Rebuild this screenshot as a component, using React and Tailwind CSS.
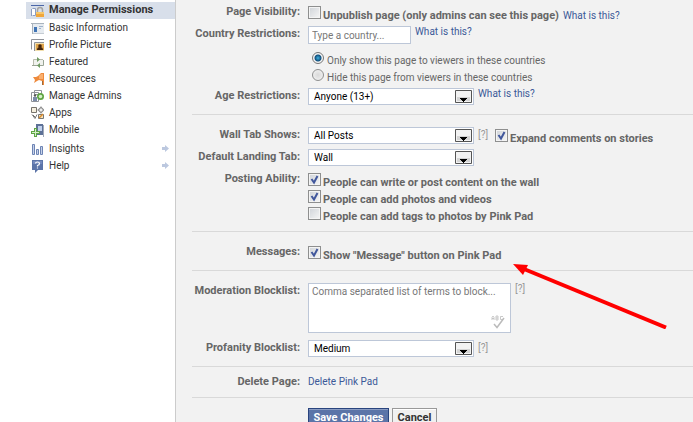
import React from 'react'

const NAV_ITEMS = [
  { name: 'Manage Permissions', icon: 'lock', active: true },
  { name: 'Basic Information', icon: 'info' },
  { name: 'Profile Picture', icon: 'picture' },
  { name: 'Featured', icon: 'featured' },
  { name: 'Resources', icon: 'resources' },
  { name: 'Manage Admins', icon: 'admins' },
  { name: 'Apps', icon: 'apps' },
  { name: 'Mobile', icon: 'mobile' },
]

const MORE_ITEMS = [
  { name: 'Insights', icon: 'insights' },
  { name: 'Help', icon: 'help' },
]

const ICONS = {
  lock: (
    <>
      <path d="M0 1h13v1H0z" fill="#4a66a8" />
      <path d="M1 5h4v7H1z" fill="#fff" />
      <path d="M.5 12V5M1.500 4.500h3v7h-3" fill="none" stroke="#8b9dc3" />
      <path d="M6.500 9V6q0-2.500 2.500-2.500t2.500 2.500v3" fill="none" stroke="#a3a3a3" strokeWidth="1.500" />
      <path d="M5 8h8v5H5z" fill="#f0a63a" />
      <path d="M5 8h8v2H5z" fill="#f8c76a" />
    </>
  ),
  info: (
    <>
      <path d="M1 2h12v11H1z" fill="#e6ebf0" />
      <path d="M0 2h13v1H0zM1 3h1v10H1z" fill="#a9b3bd" />
      <path d="M3 6h3v5H3z" fill="#3f74b5" />
      <path d="M8 5h4v1H8zM8 7h2v1H8z" fill="#9eb2cc" />
      <path d="M2 12h11v1H2z" fill="#c5ccd3" />
    </>
  ),
  picture: (
    <>
      <path d="M.5 11.500v-10H13M3.500 13V4.500H13" fill="none" stroke="#8f9299" />
      <path d="M4 5h9v8H4z" fill="#f2dfae" />
      <path d="M5 6h8v6H5z" fill="#e0a44a" />
      <circle cx="9" cy="8" r="1.800" fill="#45260f" />
      <path d="M6 12q0-3 3-3t3 3z" fill="#45260f" />
    </>
  ),
  featured: (
    <>
      <path d="M2 4h10v6H2z" fill="#f0f2ee" />
      <path d="M12 4.500H2.500V10" fill="none" stroke="#b9bcae" />
      <path d="M1 10.500h11.500V5" fill="none" stroke="#9aa595" />
      <path d="M6 2l3 2.500L6 7zM9 8l-3 2.500L9 13z" fill="#6f9b62" />
    </>
  ),
  resources: (
    <>
      <path d="M2 5h3l2-1 3-3h3v12h-2V9l-3-1-2 1-3 2 1-3z" fill="#ee8a3c" />
      <path d="M8 4l2-2h2v5H8z" fill="#f9b070" />
      <path d="M11 9h1v4h-1z" fill="#9a6a3c" />
    </>
  ),
  admins: (
    <>
      <path d="M3.500 1.500h7v4h-7zM.5 3.500h7v9h-7z" fill="#fff" stroke="#8f9299" />
      <path d="M2 8h4v4H2z" fill="#7b8ba8" />
      <circle cx="4" cy="6.500" r="1.200" fill="#555" />
      <circle cx="9.500" cy="7.500" r="3.500" fill="#5fa544" />
      <circle cx="9.500" cy="7.500" r="1.800" fill="#d5efc9" />
    </>
  ),
  apps: (
    <>
      <path d="M.5 1.500h5v5h-5z" fill="#f5efdf" stroke="#77736c" />
      <circle cx="10" cy="4" r="2.200" fill="#eee" stroke="#777" />
      <path d="M10 .5V2M10 6v1.500M6.500 4H8M12 4h1" stroke="#777" />
      <path d="M1 8.500l3 4 2-4M2 9l3 3" fill="none" stroke="#777" />
      <path d="M7.500 8.500h5v4h-5z" fill="#f6e2ba" stroke="#777" />
      <path d="M8 12l4-4" stroke="#d98a2b" strokeWidth="1.500" />
    </>
  ),
  mobile: (
    <>
      <path d="M5 1h7v11H5z" fill="#5d7197" />
      <path d="M7 3h4v5H7z" fill="#c0d0ec" />
      <path d="M12 2h1v12h-1z" fill="#a1a9b8" />
      <path d="M3 5h3v3h3v3H6v3H3v-3H0V8h3z" fill="#5fa544" />
      <path d="M4 6h1v3h3v1H5v3H4v-3H1V9h3z" fill="#d5efc9" />
    </>
  ),
  insights: (
    <path d="M1.500 2.500h2v10h-2zM5.500 7.500h2v5h-2zM9.500 4.500h2v8h-2z" fill="#c6d1e8" stroke="#6d84b4" />
  ),
  help: (
    <>
      <path d="M1 1h11v10H7l-3 3v-3H1z" fill="#5b74a8" />
      <path d="M2 2h9v3H2z" fill="#748abd" />
      <path d="M4.500 4.500q0-1.500 2-1.500t2 1.500-2 2v1M6.500 8.500v1" fill="none" stroke="#fff" strokeWidth="1.200" />
    </>
  ),
}

const NavItem = ({ name, icon, active, arrow }) => (
  <a
    href="#"
    className={`flex items-center h-[17px] gap-[5px] pl-[5px] pr-[6px] text-[#333] ${active ? 'bg-[#d8dfea] text-[11px] font-bold' : ''}`}
  >
    <svg viewBox="0 0 13 14" className="w-[13px] h-[14px] shrink-0" aria-hidden="true">
      {ICONS[icon]}
    </svg>
    <span className="flex-1 whitespace-nowrap">{name}</span>
    {arrow && (
      <svg viewBox="0 0 7 7" className="w-[7px] h-[7px]" aria-hidden="true">
        <path d="M0 2h3V0l4 3.500L3 7V5H0z" fill="#bcc8df" />
      </svg>
    )}
  </a>
)

const Section = ({ className, children }) => (
  <section className={`border-b border-[#d9d9d9] ${className}`}>{children}</section>
)

const Row = ({ label, htmlFor, tight, className = '', children }) => (
  <div className={`flex items-start gap-2 ${className}`}>
    <label
      htmlFor={htmlFor}
      className={`w-[108px] shrink-0 text-right text-[11px] font-bold whitespace-nowrap ${tight ? 'leading-3' : 'leading-4'}`}
    >
      {label}
    </label>
    {children}
  </div>
)

const Checkbox = ({ id, label, checked }) => (
  <div className="flex items-start gap-[2px] h-[17px]">
    <span className="relative size-[13px] shrink-0">
      <input
        id={id}
        type="checkbox"
        defaultChecked={checked}
        className="peer block appearance-none size-[13px] border border-[#8e8f8f] bg-linear-to-br from-[#cfd3d8] to-[#f6f6f6] shadow-[inset_0_0_0_1px_#f4f4f4]"
      />
      <svg viewBox="0 0 13 13" className="absolute inset-0 hidden peer-checked:block pointer-events-none" aria-hidden="true">
        <path d="M3.500 6l2.500 3.500L9.500 3" fill="none" stroke="#41579c" strokeWidth="2" />
      </svg>
    </span>
    <label htmlFor={id} className="pt-1 text-[11px] leading-3 font-bold whitespace-nowrap">{label}</label>
  </div>
)

const Radio = ({ id, label, checked }) => (
  <div className="flex items-start h-[17px] gap-[3px] pl-1">
    <input
      id={id}
      type="radio"
      name="country-mode"
      defaultChecked={checked}
      className="appearance-none size-3 mt-[2px] shrink-0 rounded-full border border-[#8e8f8f] bg-[radial-gradient(#d9d9d9,#f6f6f6)] checked:border-[#777] checked:bg-[radial-gradient(circle,#3fb2e0_0,#12507e_3px,#f4f4f4_4px)]"
    />
    <label htmlFor={id} className="pt-[5px] leading-3 whitespace-nowrap">{label}</label>
  </div>
)

const Select = ({ id, value }) => (
  <span className="relative w-[166px] shrink-0">
    <select
      id={id}
      defaultValue={value}
      className="block appearance-none w-full h-[17px] pl-[5px] border border-[#bdc7d8] bg-white text-black leading-[15px]"
    >
      <option>{value}</option>
    </select>
    <svg viewBox="0 0 17 13" className="absolute right-[2px] top-[2px] w-[17px] h-[13px] pointer-events-none" aria-hidden="true">
      <path d="M.5.500h16v12H.5z" fill="#f2f2f2" stroke="#555" />
      <path d="M2 7h13v4H2z" fill="#d4d4d4" />
      <path d="M5 8h7v1h-1v1h-1v1H9v1H8v-1H7v-1H6V9H5z" fill="#000" />
    </svg>
  </span>
)

const HelpLink = () => (
  <a href="#" className="leading-3 text-[#3b5998] whitespace-nowrap">What is this?</a>
)

const Hint = () => (
  <a href="#" className="leading-3 text-[#999] whitespace-nowrap">[?]</a>
)

export default function App() {
  return (
    <div className="relative flex h-screen overflow-hidden bg-white font-['Roboto',sans-serif] text-[10px] text-[#666]">
      <nav className="w-[175px] shrink-0 pl-[26px] pt-[2px]">
        {NAV_ITEMS.map((item) => (
          <NavItem key={item.name} {...item} />
        ))}
        <div className="pt-[2px]">
          {MORE_ITEMS.map((item) => (
            <NavItem key={item.name} {...item} arrow />
          ))}
        </div>
      </nav>

      <main className="flex-1 min-w-0 border-l border-[#ccc] bg-[#f2f2f2] pl-4 pt-[6px]">
        <Section className="pb-[9px]">
          <Row label="Page Visibility:" htmlFor="unpublish" tight className="mb-[3px]">
            <div className="flex gap-1">
              <Checkbox id="unpublish" label="Unpublish page (only admins can see this page)" />
              <span className="flex pt-1"><HelpLink /></span>
            </div>
          </Row>
          <Row label="Country Restrictions:" htmlFor="country">
            <div>
              <div className="flex gap-1">
                <input
                  id="country"
                  type="text"
                  placeholder="Type a country..."
                  className="w-[103px] h-[18px] px-[3px] border border-[#bdc7d8] bg-white placeholder:text-[#777]"
                />
                <HelpLink />
              </div>
              <div className="pt-[6px] pb-1">
                <Radio id="only-show" label="Only show this page to viewers in these countries" checked />
                <Radio id="hide-from" label="Hide this page from viewers in these countries" />
              </div>
            </div>
          </Row>
          <Row label="Age Restrictions:" htmlFor="age">
            <div className="flex gap-1">
              <Select id="age" value="Anyone (13+)" />
              <HelpLink />
            </div>
          </Row>
        </Section>

        <Section className="pt-3 pb-[7px]">
          <Row label="Wall Tab Shows:" htmlFor="wall-tab" className="mb-[5px]">
            <div className="flex items-start gap-1 h-[17px]">
              <Select id="wall-tab" value="All Posts" />
              <span className="flex w-[13px] pt-[2px]"><Hint /></span>
              <span className="pt-[2px]"><Checkbox id="expand" label="Expand comments on stories" checked /></span>
            </div>
          </Row>
          <Row label="Default Landing Tab:" htmlFor="landing-tab" className="mb-[7px]">
            <Select id="landing-tab" value="Wall" />
          </Row>
          <Row label="Posting Ability:" htmlFor="post-wall" tight>
            <div>
              <Checkbox id="post-wall" label="People can write or post content on the wall" checked />
              <Checkbox id="post-media" label="People can add photos and videos" checked />
              <Checkbox id="post-tags" label="People can add tags to photos by Pink Pad" />
            </div>
          </Row>
        </Section>

        <Section className="pt-[14px] pb-[7px]">
          <Row label="Messages:" htmlFor="messages" tight>
            <Checkbox id="messages" label={'Show "Message" button on Pink Pad'} checked />
          </Row>
        </Section>

        <Section className="pt-3 pb-[9px]">
          <Row label="Moderation Blocklist:" htmlFor="moderation" className="mb-[7px]">
            <div className="flex gap-1">
              <span className="relative">
                <textarea
                  id="moderation"
                  placeholder="Comma separated list of terms to block..."
                  className="block resize-none w-[203px] h-[50px] px-[3px] py-[2px] border border-[#bdc7d8] bg-white leading-3 placeholder:text-[#777]"
                />
                <svg viewBox="0 0 14 14" className="absolute right-[6px] bottom-[4px] size-[14px] pointer-events-none" fill="none" stroke="#bbb" aria-hidden="true">
                  <path d="M1 5V2.500L2 1l1 1.500V5M1 3.500h2M5 1v4h2V1zM5 3h2M12 1.500H9.500v3H12" strokeWidth=".8" />
                  <path d="M3 9l3 3.500L13 3" strokeWidth="1.500" />
                </svg>
              </span>
              <Hint />
            </div>
          </Row>
          <Row label="Profanity Blocklist:" htmlFor="profanity">
            <div className="flex gap-1">
              <Select id="profanity" value="Medium" />
              <span className="flex pt-[2px]"><Hint /></span>
            </div>
          </Row>
        </Section>

        <Section className="pt-[9px] pb-[9px]">
          <Row label="Delete Page:" htmlFor="delete-page" tight>
            <a id="delete-page" href="#" className="leading-3 text-[#3b5998]">Delete Pink Pad</a>
          </Row>
        </Section>

        <div className="flex gap-[3px] pl-[116px] pt-[10px]">
          <button className="h-[19px] w-[81px] border border-[#29447e] bg-[#5b74a8] shadow-[inset_0_1px_0_#8a9cc2] text-[11px] font-bold text-white leading-4 whitespace-nowrap">
            Save Changes
          </button>
          <button className="h-[19px] w-[45px] border border-[#999] bg-[#f0f0f0] shadow-[inset_0_1px_0_#fff] text-[11px] font-bold text-[#333] leading-4 whitespace-nowrap">
            Cancel
          </button>
        </div>
      </main>

      <svg viewBox="0 0 154 65" className="absolute left-[513px] top-[264px] w-[154px] h-[65px] pointer-events-none" aria-hidden="true">
        <path d="M11 5L153 63.500" stroke="#f00" strokeWidth="4" />
        <path d="M0 0l15 1-5 10z" fill="#f00" />
      </svg>
    </div>
  )
}
